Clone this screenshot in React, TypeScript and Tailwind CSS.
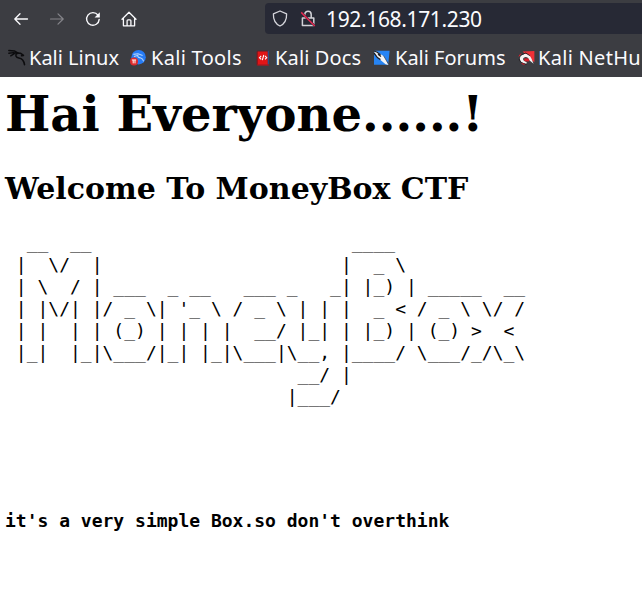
import React from "react";

const BANNER = [
  "  __  __                        ____",
  " |  \\/  |                      |  _ \\",
  " | \\  / | ___  _ __   ___ _   _| |_) | _____  __",
  " | |\\/| |/ _ \\| '_ \\ / _ \\ | | |  _ < / _ \\ \\/ /",
  " | |  | | (_) | | | |  __/ |_| | |_) | (_) >  <",
  " |_|  |_|\\___/|_| |_|\\___|\\__, |____/ \\___/_/\\_\\",
  "                           __/ |",
  "                          |___/",
].join("\n");

function BackIcon() {
  return (
    <svg width="16" height="16" viewBox="0 0 16 16" fill="none" stroke="#fbfbfe" strokeWidth="1.3" strokeLinecap="round" strokeLinejoin="round">
      <path d="M14.5 8H2M7 2.8 1.8 8 7 13.2" />
    </svg>
  );
}

function ForwardIcon() {
  return (
    <svg width="16" height="16" viewBox="0 0 16 16" fill="none" stroke="#85858a" strokeWidth="1.2" strokeLinecap="round" strokeLinejoin="round">
      <path d="M1.5 8H14M9 2.8 14.2 8 9 13.2" />
    </svg>
  );
}

function ReloadIcon() {
  return (
    <svg width="16" height="16" viewBox="0 0 16 16" fill="none" stroke="#fbfbfe" strokeWidth="1.4" strokeLinecap="round">
      <path d="M13 4.2A6.3 6.3 0 1 0 14.2 8.4" />
      <path d="M14.8 1.2v5.2H9.6z" fill="#fbfbfe" stroke="none" />
    </svg>
  );
}

function HomeIcon() {
  return (
    <svg width="16" height="16" viewBox="0 0 16 16" fill="none" stroke="#fbfbfe" strokeWidth="1.3" strokeLinecap="round" strokeLinejoin="round">
      <path d="M1 8.2 8 1.2l7 7M2.4 7v7.8h11.2V7M6.1 14.6V9.8q0-.9.9-.9h2q.9 0 .9.9v4.8" />
    </svg>
  );
}

function ShieldIcon() {
  return (
    <svg width="16" height="17" viewBox="0 0 16 17" fill="none" stroke="#d6d6dc" strokeWidth="1.3" strokeLinejoin="round">
      <path d="M8 1 14.6 3.9C14.8 9.2 12.8 13.6 8 16 3.2 13.6 1.2 9.2 1.4 3.9Z" />
    </svg>
  );
}

function InsecureIcon() {
  return (
    <svg width="16" height="17" viewBox="0 0 16 17" fill="none" stroke="#d2d2d8" strokeWidth="1.5">
      <path d="M4.8 7.8V4.4a3.2 3.2 0 0 1 6.4 0v3.4M2.4 8h11.4v7.6H2.4z" strokeLinejoin="round" />
      <path d="m1.2 2.4 13.6 13.6" stroke="#272935" strokeWidth="2.2" />
      <path d="m1.2 2.4 13.6 13.6" stroke="#e22850" strokeWidth="1.5" />
    </svg>
  );
}

function KaliIcon() {
  return (
    <svg width="18" height="17" viewBox="0 0 17 16" fill="none" stroke="#0c0c0e" strokeLinecap="round" strokeLinejoin="round">
      <path d="M.8 1.4 6 1.8l3.6 2M.8 4 5.2 3.4l4 .8M2.6 6.4 6 4.4" strokeWidth="1.4" />
      <path d="M8.4 4c-2 2-.8 4 1.8 4.4 3 .4 4.8 2 5.4 6.4M8.6 3.8l3.4.2 2.6 2-1.8.4" strokeWidth="1.5" />
    </svg>
  );
}

function ToolsIcon() {
  return (
    <svg width="16" height="16" viewBox="0 0 16 16">
      <circle cx="8.6" cy="7.2" r="7.2" fill="#267bf5" />
      <path d="M3.4 4.4 8 3.8l4.6 1.8M4 6.6l4.4-1.4M8 5.2c-.8 2 1 2.4 2.8 2.8s2.4 1.8 2.8 3.4" fill="none" stroke="#b5d5fb" strokeWidth="1.1" />
      <circle cx="4" cy="11.4" r="4" fill="#df2b2c" />
      <path d="M1.9 10h4.2M3.2 10.2v3.2M5 10.2v3.2" stroke="#fff" strokeWidth="1" />
    </svg>
  );
}

function DocsIcon() {
  return (
    <svg width="14" height="16" viewBox="0 0 14 16">
      <path d="M1.2.6h11.6v2H1.2z" fill="#53252d" />
      <path d="M.6 1.6h2v13.4h-2z" fill="#83151c" />
      <path d="M1.8 1.6h10v13.6h-10z" fill="#e01517" />
      <path d="M11.8.8H13v13.6h-1.2z" fill="#2c4d86" />
      <path d="M1 14.4h12v1.2H1z" fill="#9f1820" />
      <path d="M5.2 5.8 3.5 7.7l1.7 1.7M9 5.8l1.7 1.9L9 9.4M7.8 5 6.3 10.2" fill="none" stroke="#fff" strokeWidth="1.1" />
    </svg>
  );
}

function ForumsIcon() {
  return (
    <svg width="17" height="16" viewBox="0 0 17 16">
      <path d="M1 .8h15.6l-1.4 14H1z" fill="#2684f4" />
      <path d="M.8 1.4 3 1l8.2 5.4 2.2 4.4 2.4 4.2-3.2-.8-5.4-4.4L4 7.4z" fill="#f3f5f7" />
      <path d="M.8 1 3.8 2l3.8 2.8M1 3l3.4 4.6 3 2M5 4.2l3 2.4" fill="none" stroke="#1c1f28" strokeWidth="1.3" />
      <path d="m10.6 5.8 2.6 4.4 2.6 4.6" fill="none" stroke="#303441" strokeWidth=".7" />
    </svg>
  );
}

function NetHunterIcon() {
  return (
    <svg width="17" height="16" viewBox="0 0 17 16">
      <path d="M4.6 1.6 16.4 1v11.2L12 9z" fill="#ee3037" />
      <path d="M6.2 8.4h5v3h-5z" fill="#d81f2b" />
      <path d="M4.4 12.6C.6 10 1.4 6 5.2 4.4c4-1.4 7 1 8.2 4.2l2.2 5.2-4-3.4C10 6.6 7.4 6.4 5.8 7.8s-.4 3.4 3 4.4l-.6 1.8z" fill="#f5f3f3" />
      <path d="M1 8.8c.6 3 3.2 5.4 7.6 5.6M3.4 4.8 7.8 3l4 2.6" fill="none" stroke="#292328" strokeWidth="1" />
      <path d="M.8 6.4 3 3.6M3.6 13.6l3 .8" stroke="#d81f2b" strokeWidth="1" />
    </svg>
  );
}

function Bookmark({ icon, label, className, labelClass }: { icon: React.ReactNode; label: string; className: string; labelClass: string }) {
  return (
    <div className={`flex shrink-0 items-center ${className}`}>
      {icon}
      <span className={`whitespace-nowrap ${labelClass}`}>{label}</span>
    </div>
  );
}

export default function App() {
  return (
    <div className="flex h-[595px] w-[642px] flex-col overflow-hidden bg-white text-black">
      <header className="h-[77px] shrink-0 bg-[#3c3d42] font-['Noto_Sans',sans-serif] text-[#fbfbfe]">
        <div className="flex h-[38px] items-center">
          <nav className="flex gap-5 pl-[13px]">
            <BackIcon />
            <ForwardIcon />
            <ReloadIcon />
            <HomeIcon />
          </nav>
          <div className="-mt-px ml-32 flex h-[31px] flex-1 items-center rounded-l bg-[#272935] pl-[7px]">
            <ShieldIcon />
            <span className="ml-3 flex"><InsecureIcon /></span>
            <span className="ml-2.5 pt-0.5 text-[21px] leading-none tracking-[-0.35px]">192.168.171.230</span>
          </div>
        </div>
        <div className="flex h-[39px] items-center overflow-hidden text-[20px]">
          <Bookmark className="w-[122px] pl-2" labelClass="ml-[3px]" icon={<KaliIcon />} label="Kali Linux" />
          <Bookmark className="w-[126px] pl-2" labelClass="ml-[5px] tracking-[0.3px]" icon={<ToolsIcon />} label="Kali Tools" />
          <Bookmark className="w-[117px] pl-2" labelClass="ml-[5px] tracking-[0.15px]" icon={<DocsIcon />} label="Kali Docs" />
          <Bookmark className="w-[145px] pl-2" labelClass="ml-[5px]" icon={<ForumsIcon />} label="Kali Forums" />
          <Bookmark className="w-[132px] pl-2" labelClass="ml-[3px] tracking-[0.3px]" icon={<NetHunterIcon />} label="Kali NetHu" />
        </div>
      </header>
      <main className="flex flex-col pl-[5px]">
        <h1 className="mt-[9px] font-['DejaVu_Serif',serif] text-[48px] leading-[56px] font-bold whitespace-nowrap">Hai Everyone......!</h1>
        <h2 className="mt-[29px] font-['DejaVu_Serif',serif] text-[30px] leading-[36px] font-bold whitespace-nowrap">Welcome To MoneyBox CTF</h2>
        <pre className="mt-[25px] font-['DejaVu_Sans_Mono',monospace] text-[18px] leading-[22px]">{BANNER}</pre>
        <h4 className="mt-[102px] font-['DejaVu_Sans_Mono',monospace] text-[18px] leading-[22px] font-bold">it's a very simple Box.so don't overthink</h4>
      </main>
    </div>
  );
}
